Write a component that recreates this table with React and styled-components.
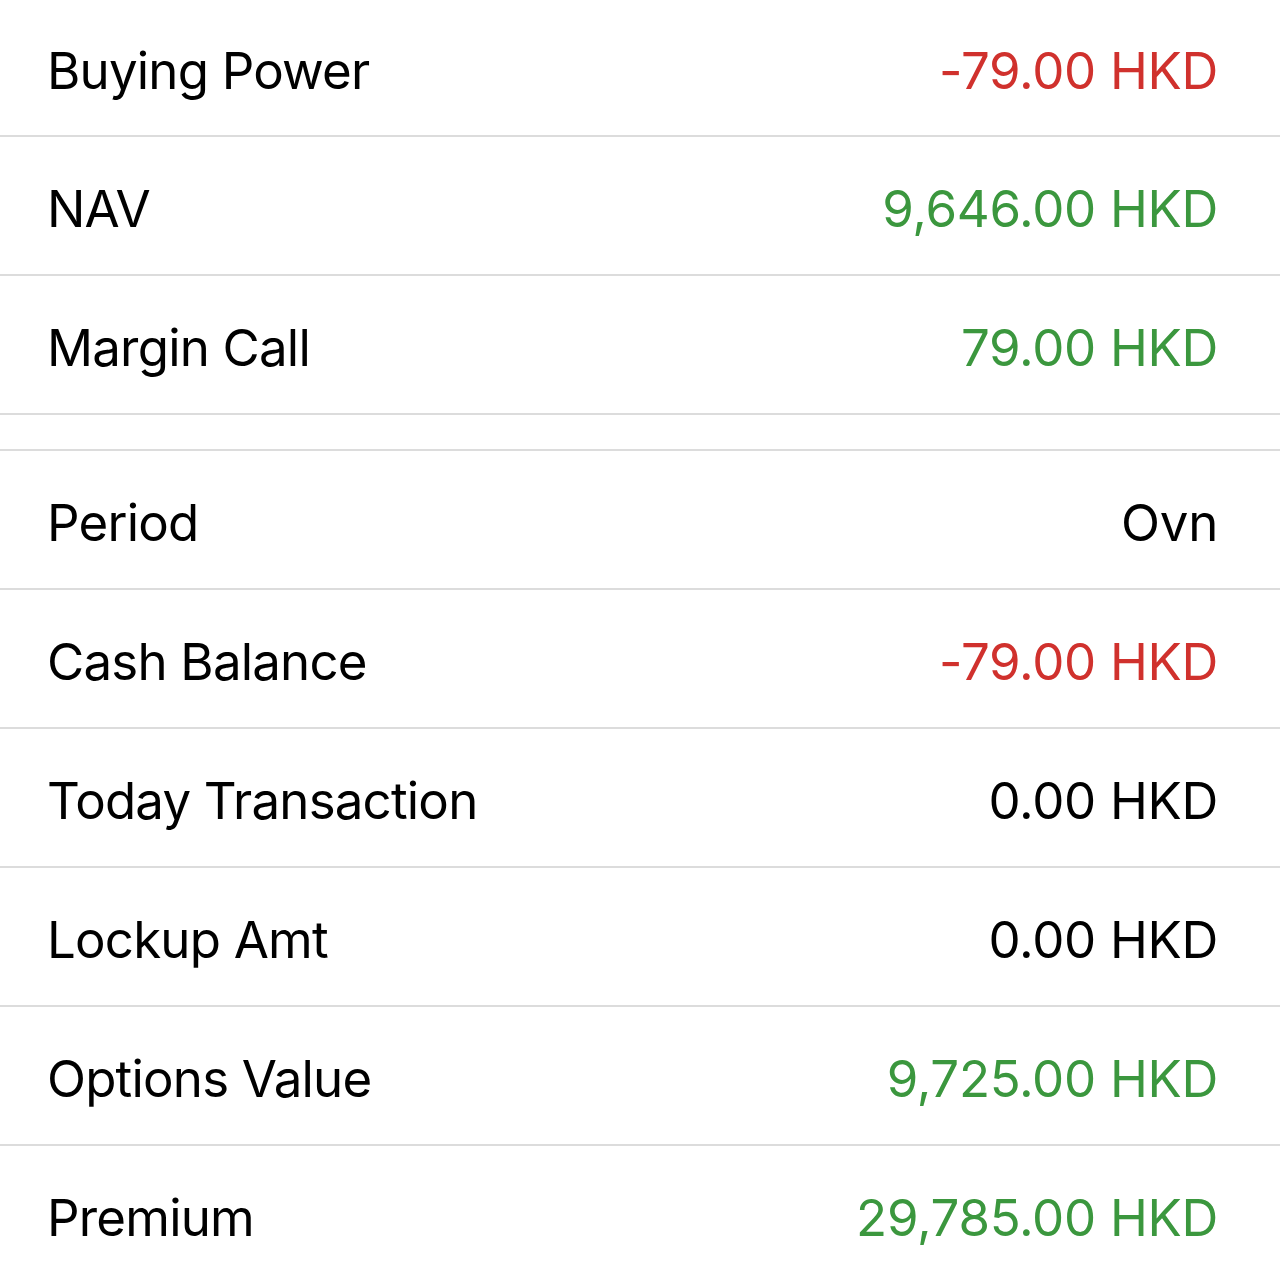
import React from "react";
import styled, { createGlobalStyle } from "styled-components";

const Global = createGlobalStyle`
  html, body { margin: 0; padding: 0; background: #ffffff; }
  body { font-family: Inter, "Noto Sans", sans-serif; }
`;

const Page = styled.div`
  width: 1280px;
  height: 1280px;
  overflow: hidden;
  background: #ffffff;
  display: flex;
  flex-direction: column;
`;

const Section = styled.div`
  display: flex;
  flex-direction: column;
  background: #ffffff;
  border-top: ${(p) => (p.$topBorder ? "2px solid #dcdcdc" : "none")};
  margin-top: ${(p) => p.$gap || 0}px;
`;

const Row = styled.div`
  display: flex;
  align-items: center;
  justify-content: space-between;
  box-sizing: border-box;
  height: ${(p) => p.$h || 139}px;
  padding: 5px 62px 0 47px;
  border-bottom: 2px solid #dcdcdc;
  flex-shrink: 0;
`;

const Label = styled.span`
  font-size: 51px;
  color: #000000;
  letter-spacing: -0.8px;
`;

const colors = { red: "#d0312d", green: "#3b973e", black: "#000000" };

const Value = styled.span`
  font-size: 51px;
  color: ${(p) => colors[p.$tone]};
  letter-spacing: -0.3px;
`;

const top = [
  ["Buying Power", "-79.00 HKD", "red"],
  ["NAV", "9,646.00 HKD", "green"],
  ["Margin Call", "79.00 HKD", "green"],
];

const bottom = [
  ["Period", "Ovn", "black"],
  ["Cash Balance", "-79.00 HKD", "red"],
  ["Today Transaction", "0.00 HKD", "black"],
  ["Lockup Amt", "0.00 HKD", "black"],
  ["Options Value", "9,725.00 HKD", "green"],
  ["Premium", "29,785.00 HKD", "green"],
];

export default function App() {
  return (
    <Page>
      <Global />
      <Section>
        {top.map(([l, v, t], i) => (
          <Row key={l} $h={i === 0 ? 137 : 139}>
            <Label>{l}</Label>
            <Value $tone={t}>{v}</Value>
          </Row>
        ))}
      </Section>
      <Section $topBorder $gap={34}>
        {bottom.map(([l, v, t]) => (
          <Row key={l}>
            <Label>{l}</Label>
            <Value $tone={t}>{v}</Value>
          </Row>
        ))}
      </Section>
    </Page>
  );
}
